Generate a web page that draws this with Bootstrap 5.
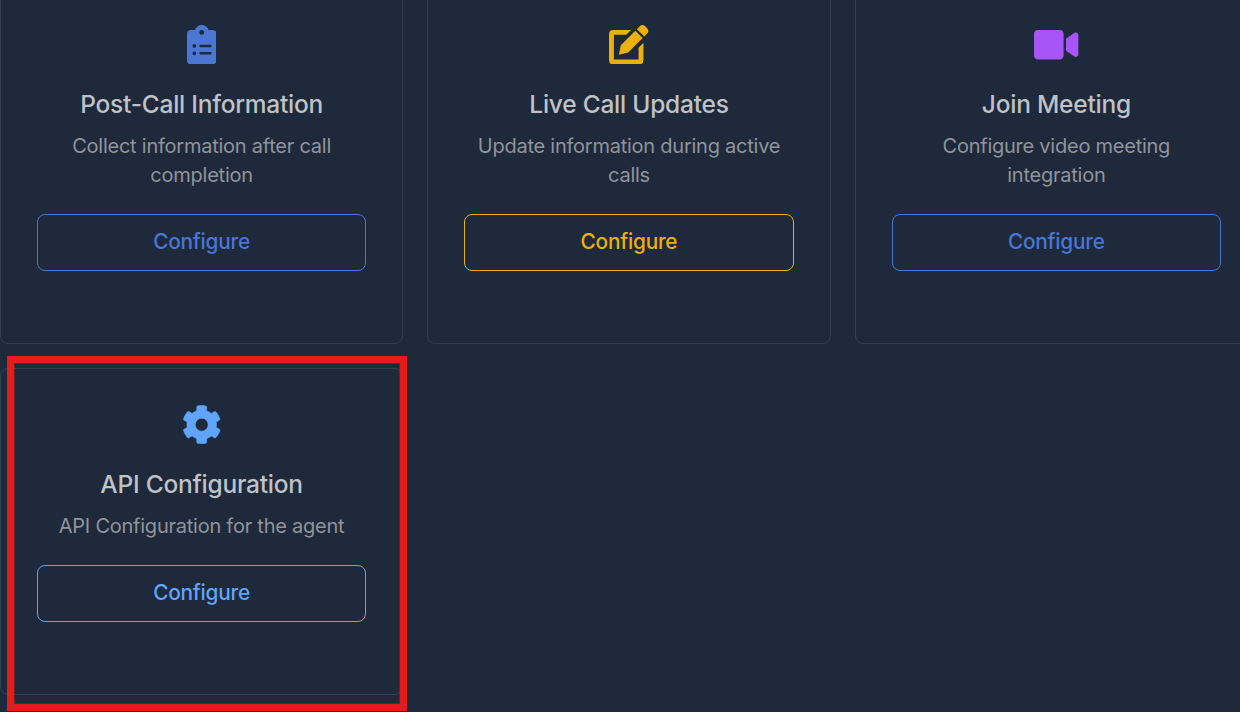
<!DOCTYPE html>
<html lang="en">
<head>
<meta charset="utf-8">
<meta name="viewport" content="width=device-width, initial-scale=1">
<title>Agent configuration</title>
<link href="https://cdn.jsdelivr.net/npm/bootstrap@5.3.0/dist/css/bootstrap.min.css" rel="stylesheet">
<style>
body{background:#1e293b;font-family:Inter,sans-serif;overflow:hidden;height:712px}
.agent-grid{display:grid;grid-template-columns:repeat(3,403.2px);gap:24px 24.2px;width:1258px;margin-top:-12px}
.tile{--bs-card-bg:transparent;--bs-card-border-color:#343f4f;--bs-card-border-radius:8px;height:356px;padding:35.6px 36px 35px;text-align:center}
.tile.short{height:327px}
.tile svg{height:39.4px;fill:currentColor;display:block;margin:0 auto 24px}
.tile h2{font-size:24.5px;letter-spacing:-.24px;font-weight:500;line-height:32px;margin:0 0 12px;color:#bfc2c6;white-space:nowrap}
.tile p{font-size:20px;letter-spacing:-.24px;line-height:29px;margin:0 0 24px;color:#90949b}
.tile .btn{font-size:20.8px;letter-spacing:-.22px;font-weight:500;height:57px;border-radius:8px;border:1px solid currentColor;color:inherit;padding:0;line-height:54px}
.c-blue{color:#4a76d4}.c-gold{color:#eab010}.c-purple{color:#a855f7}.c-sky{color:#60a5fa}
.highlight{position:absolute;left:6px;top:-13px;width:400px;height:355px;border:7px solid #e81b1b;box-shadow:inset 0 0 0 1px rgba(232,27,27,.35);z-index:2}
</style>
</head>
<body>
<main class="agent-grid">
  <section class="card tile">
    <svg class="c-blue" viewBox="0 0 384 512"><path d="M192 0c-41.800 0-77.400 26.700-90.500 64H48C21.500 64 0 85.500 0 112V464c0 26.500 21.500 48 48 48H336c26.500 0 48-21.500 48-48V112c0-26.500-21.500-48-48-48H282.500C269.400 26.700 233.800 0 192 0zm0 64a32 32 0 1 1 0 64 32 32 0 1 1 0-64zM72 272a24 24 0 1 1 48 0 24 24 0 1 1-48 0zm104-16H304c8.800 0 16 7.200 16 16s-7.200 16-16 16H176c-8.800 0-16-7.200-16-16s7.200-16 16-16zM72 368a24 24 0 1 1 48 0 24 24 0 1 1-48 0zm88 0c0-8.800 7.200-16 16-16H304c8.800 0 16 7.200 16 16s-7.200 16-16 16H176c-8.800 0-16-7.200-16-16z"/></svg>
    <h2>Post-Call Information</h2>
    <p>Collect information after call completion</p>
    <div class="c-blue"><button class="btn w-100">Configure</button></div>
  </section>
  <section class="card tile">
    <svg class="c-gold" viewBox="0 0 40 40"><path d="M22.500 5H4.500Q0 5 0 9.500V35.500Q0 40 4.500 40H30.500Q35 40 35 35.500V18L30 23V35H5V10H17.500ZM26.700 5.800L34.200 13.300L19.500 28L10 30.300L12 20.500ZM28.300 4.200L31 1.500Q34 -1.500 37 1.500L38.500 3Q41.500 6 38.500 9L35.800 11.700Z"/></svg>
    <h2>Live Call Updates</h2>
    <p>Update information during active calls</p>
    <div class="c-gold"><button class="btn w-100">Configure</button></div>
  </section>
  <section class="card tile">
    <svg class="c-purple" viewBox="0 0 576 512"><path d="M336.200 64H47.800C21.400 64 0 85.400 0 111.800v288.400C0 426.600 21.400 448 47.800 448h288.400c26.400 0 47.800-21.400 47.800-47.800V111.800c0-26.400-21.400-47.800-47.800-47.800zm189.400 37.700L416 177.300v157.400l109.600 75.500c21.200 14.600 50.400-.3 50.400-25.700V127.500c0-25.400-29.100-40.400-50.400-25.800z"/></svg>
    <h2>Join Meeting</h2>
    <p>Configure video meeting<br>integration</p>
    <div class="c-blue"><button class="btn w-100">Configure</button></div>
  </section>
  <section class="card tile short">
    <svg class="c-sky" viewBox="0 0 512 512"><path d="M487.400 315.700l-42.600-24.600c4.300-23.200 4.300-47 0-70.200l42.600-24.600c4.900-2.800 7.100-8.600 5.500-14-11.100-35.600-30-67.800-54.700-94.600-3.800-4.100-10-5.100-14.800-2.300L380.800 110c-17.900-15.400-38.500-27.300-60.800-35.100V25.800c0-5.600-3.900-10.500-9.400-11.700-36.700-8.200-74.300-7.800-109.200 0-5.500 1.200-9.400 6.100-9.400 11.700V75c-22.200 7.900-42.800 19.800-60.800 35.100L88.700 85.500c-4.900-2.800-11-1.900-14.800 2.300-24.700 26.700-43.600 58.900-54.700 94.600-1.700 5.400.6 11.200 5.500 14L67.300 221c-4.300 23.200-4.300 47 0 70.200l-42.600 24.600c-4.900 2.800-7.100 8.600-5.500 14 11.100 35.600 30 67.800 54.700 94.600 3.800 4.100 10 5.100 14.800 2.300l42.600-24.600c17.900 15.400 38.500 27.300 60.800 35.100v49.200c0 5.600 3.900 10.500 9.400 11.700 36.700 8.200 74.300 7.800 109.200 0 5.500-1.200 9.400-6.100 9.400-11.700v-49.200c22.200-7.900 42.800-19.800 60.800-35.100l42.600 24.600c4.900 2.800 11 1.900 14.800-2.300 24.700-26.700 43.600-58.900 54.700-94.600 1.500-5.500-.7-11.300-5.600-14.100zM256 340a84 84 0 1 1 0-168 84 84 0 1 1 0 168z" stroke="currentColor" stroke-width="8"/></svg>
    <h2>API Configuration</h2>
    <p>API Configuration for the agent</p>
    <div class="c-sky"><button class="btn w-100">Configure</button></div>
    <div class="highlight"></div>
  </section>
</main>
<script src="https://cdn.jsdelivr.net/npm/bootstrap@5.3.0/dist/js/bootstrap.bundle.min.js"></script>
</body>
</html>
